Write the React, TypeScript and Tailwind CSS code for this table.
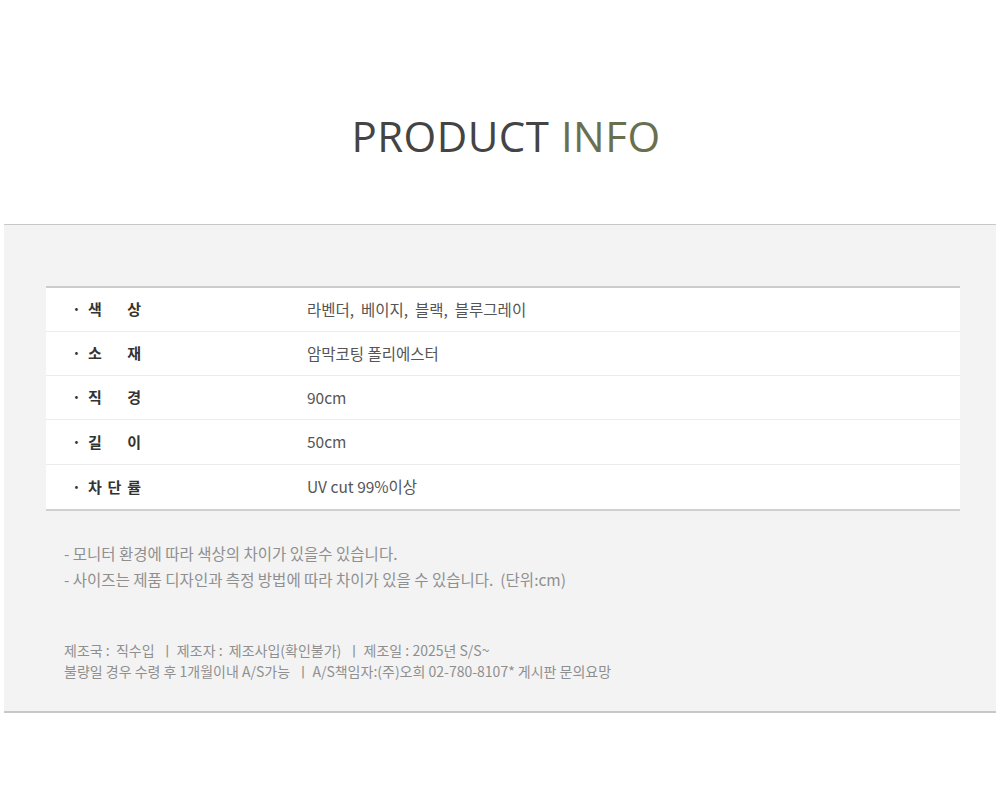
import React from 'react';

interface InfoRow {
    label: string[];
    value: string;
    height: string;
}

const rows: InfoRow[] = [
    { label: ['색', '상'], value: '라벤더,  베이지,  블랙,  블루그레이', height: 'h-[44px]' },
    { label: ['소', '재'], value: '암막코팅 폴리에스터', height: 'h-[44px]' },
    { label: ['직', '경'], value: '90cm', height: 'h-[44px]' },
    { label: ['길', '이'], value: '50cm', height: 'h-[45px]' },
    { label: ['차', '단', '률'], value: 'UV cut 99%이상', height: 'h-[46px]' },
];

const kr = { fontFamily: '"Noto Sans CJK KR", "Noto Sans", sans-serif' };

const App: React.FC = () => {
    return (
        <div className="w-[1000px] min-h-[796px] bg-white">
            <div className="pt-[115px] h-[224px] pl-[12px]">
                <h1
                    className="text-center text-[42px] leading-none tracking-[0.5px] text-[#444444]"
                    style={{ fontFamily: '"Open Sans", "Noto Sans", sans-serif' }}
                >
                    PRODUCT <span className="text-[#697050]">INFO</span>
                </h1>
            </div>

            <div className="mx-[4px] bg-[#f3f3f3] border-t border-b-2 border-[#c8c8c8] pt-[61px] pb-[29px]" style={kr}>
                <div className="ml-[42px] mr-[36px] bg-white border-t-2 border-[#cccccc]">
                    {rows.map((row, index) => (
                        <div
                            key={index}
                            className={
                                index === rows.length - 1
                                    ? `flex items-center ${row.height} border-b-2 border-[#d0d0d0]`
                                    : `flex items-center ${row.height} border-b border-[#ececec]`
                            }
                        >
                            <div className="flex items-center w-[261px] pl-[26px]">
                                <span className="text-[15px] text-[#333] font-bold w-[16px]">·</span>
                                <span className="flex justify-between w-[53px] text-[15px] font-bold text-[#333]">
                                    {row.label.map((ch, i) => (
                                        <span key={i}>{ch}</span>
                                    ))}
                                </span>
                            </div>
                            <span className="text-[15.5px] text-[#555] whitespace-pre">{row.value}</span>
                        </div>
                    ))}
                </div>

                <div className="pl-[60px] pt-[29px] text-[15.5px] leading-[26px] text-[#8f8f8f]">
                    <p>- 모니터 환경에 따라 색상의 차이가 있을수 있습니다.</p>
                    <p>- 사이즈는 제품 디자인과 측정 방법에 따라 차이가 있을 수 있습니다.&nbsp; (단위:cm)</p>
                </div>

                <div className="pl-[60px] pt-[48px] text-[14px] leading-[21px] text-[#8f8f8f]">
                    <p className="whitespace-pre">제조국 :  직수입  ㅣ 제조자 :  제조사입(확인불가)  ㅣ 제조일 : 2025년 S/S~</p>
                    <p className="whitespace-pre">불량일 경우 수령 후 1개월이내 A/S가능  ㅣ A/S책임자:(주)오희 02-780-8107* 게시판 문의요망</p>
                </div>
            </div>
        </div>
    );
};

export default App;
